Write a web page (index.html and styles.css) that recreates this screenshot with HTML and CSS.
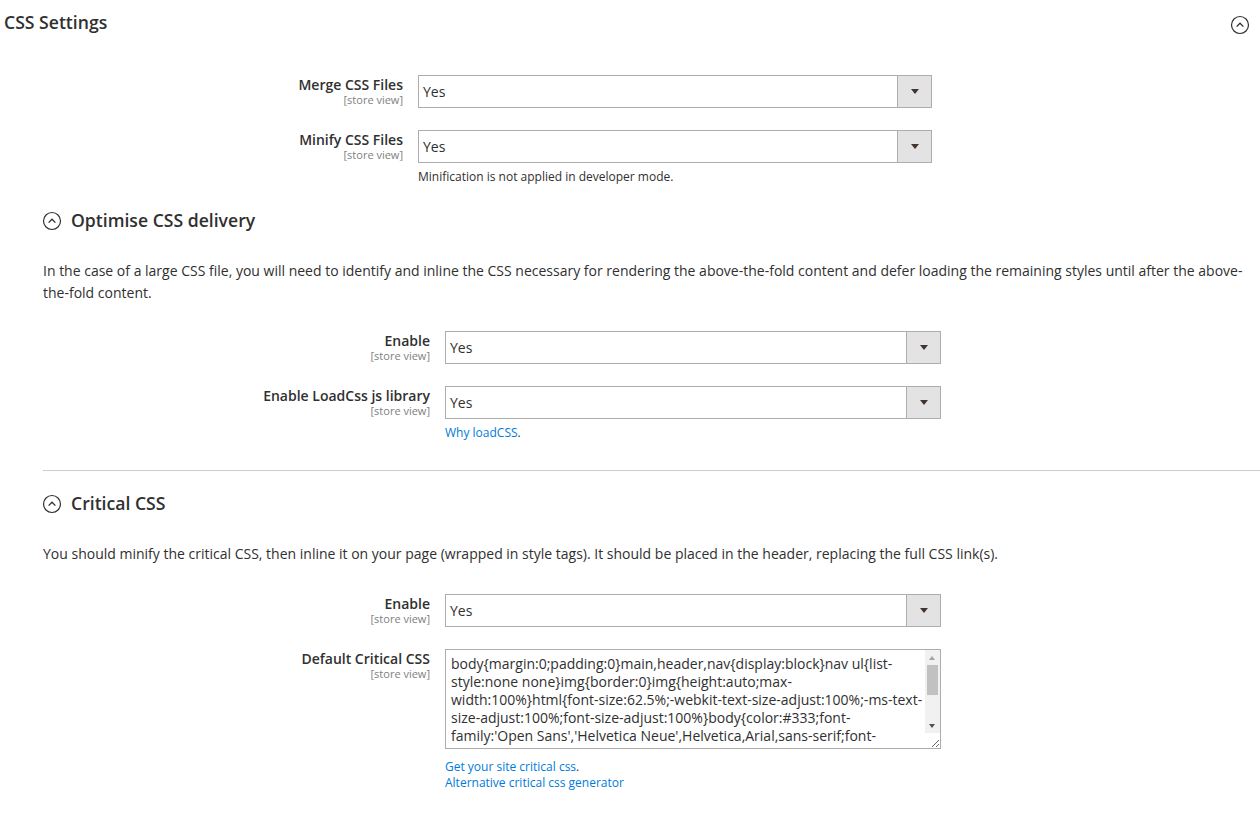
FILE: index.html
```html
<!DOCTYPE html>
<html>
<head>
<meta charset="utf-8">
<link rel="stylesheet" href="styles.css">
</head>
<body>
<div class="page">
  <div class="section-head">
    <span class="section-title">CSS Settings</span>
    <svg class="toggle" width="20" height="20" viewBox="0 0 20 20"><circle cx="10" cy="10" r="8.5" fill="none" stroke="#303030" stroke-width="1.2"/><path d="M6.6 11.6 L10 8.2 L13.4 11.6" fill="none" stroke="#303030" stroke-width="1.3"/></svg>
  </div>

  <div class="fields fields-top">
    <div class="label"><span class="name">Merge CSS Files</span><span class="scope">[store view]</span></div>
    <div class="control">
      <div class="select"><span class="value">Yes</span><span class="arrow"></span></div>
    </div>
    <div class="label"><span class="name">Minify CSS Files</span><span class="scope">[store view]</span></div>
    <div class="control">
      <div class="select"><span class="value">Yes</span><span class="arrow"></span></div>
      <div class="note">Minification is not applied in developer mode.</div>
    </div>
  </div>

  <div class="sub">
    <div class="sub-head">
      <svg class="sub-toggle" width="20" height="20" viewBox="0 0 20 20"><circle cx="10" cy="10" r="8.5" fill="none" stroke="#303030" stroke-width="1.2"/><path d="M6.6 11.6 L10 8.2 L13.4 11.6" fill="none" stroke="#303030" stroke-width="1.3"/></svg>
      <span class="sub-title">Optimise CSS delivery</span>
    </div>
    <p class="desc">In the case of a large CSS file, you will need to identify and inline the CSS necessary for rendering the above-the-fold content and defer loading the remaining styles until after the above-the-fold content.</p>
    <div class="fields fields-sub">
      <div class="label"><span class="name">Enable</span><span class="scope">[store view]</span></div>
      <div class="control">
        <div class="select"><span class="value">Yes</span><span class="arrow"></span></div>
      </div>
      <div class="label"><span class="name">Enable LoadCss js library</span><span class="scope">[store view]</span></div>
      <div class="control">
        <div class="select"><span class="value">Yes</span><span class="arrow"></span></div>
        <div class="note"><a href="#" class="link">Why loadCSS</a>.</div>
      </div>
    </div>
  </div>

  <div class="divider"></div>

  <div class="sub">
    <div class="sub-head sub-head-2">
      <svg class="sub-toggle" width="20" height="20" viewBox="0 0 20 20"><circle cx="10" cy="10" r="8.5" fill="none" stroke="#303030" stroke-width="1.2"/><path d="M6.6 11.6 L10 8.2 L13.4 11.6" fill="none" stroke="#303030" stroke-width="1.3"/></svg>
      <span class="sub-title">Critical CSS</span>
    </div>
    <p class="desc desc-2">You should minify the critical CSS, then inline it on your page (wrapped in style tags). It should be placed in the header, replacing the full CSS link(s).</p>
    <div class="fields fields-sub">
      <div class="label"><span class="name">Enable</span><span class="scope">[store view]</span></div>
      <div class="control">
        <div class="select"><span class="value">Yes</span><span class="arrow"></span></div>
      </div>
      <div class="label"><span class="name">Default Critical CSS</span><span class="scope">[store view]</span></div>
      <div class="control">
        <div class="ta-wrap">
          <textarea class="textarea">body{margin:0;padding:0}main,header,nav{display:block}nav ul{list-style:none none}img{border:0}img{height:auto;max-width:100%}html{font-size:62.5%;-webkit-text-size-adjust:100%;-ms-text-size-adjust:100%;font-size-adjust:100%}body{color:#333;font-family:'Open Sans','Helvetica Neue',Helvetica,Arial,sans-serif;font-style:normal;font-weight:400;line-height:1.42857143;font-size:1.4rem}p{margin-top:0;margin-bottom:1rem}a{color:#1979c3;text-decoration:none}a:visited{color:#1979c3;text-decoration:none}a:hover{color:#006bb4;text-decoration:underline}ul{margin-top:0;margin-bottom:2.5rem}ul>li{margin-top:0;margin-bottom:1rem}ul ul{margin-bottom:0}button{background-image:none;background:#eee;border:1px solid #ccc;color:#333;cursor:pointer;display:inline-block;font-family:'Open Sans','Helvetica Neue',Helvetica,Arial,sans-serif;font-weight:600;margin:0;padding:7px 15px;font-size:1.4rem;line-height:1.6rem;box-sizing:border-box;vertical-align:middle}</textarea>
          <div class="vscroll">
            <div class="sb-btn sb-up"></div>
            <div class="sb-thumb"></div>
            <div class="sb-btn sb-down"></div>
          </div>
        </div>
        <div class="links">
          <div><a href="#" class="link">Get your site critical css</a>.</div>
          <div><a href="#" class="link">Alternative critical css generator</a></div>
        </div>
      </div>
    </div>
  </div>
</div>
</body>
</html>
```
FILE: styles.css
```css
html, body {
  margin: 0;
  padding: 0;
  background: #fff;
}
body {
  font-family: "Open Sans", "Liberation Sans", sans-serif;
  color: #303030;
  font-size: 14px;
}
.page {
  width: 1260px;
}
.section-head {
  display: flex;
  align-items: center;
  justify-content: space-between;
  height: 44px;
  padding-left: 4px;
  padding-right: 10px;
}
.section-title {
  font-size: 17.6px;
  font-weight: 600;
  line-height: 24px;
}
.toggle {
  margin-top: 6px;
}
.fields {
  display: grid;
  column-gap: 15px;
  row-gap: 22px;
}
.fields-top {
  grid-template-columns: 403px 514px;
  margin-top: 31px;
}
.fields-sub {
  grid-template-columns: 387px 496px;
  margin-left: 43px;
}
.label {
  display: flex;
  flex-direction: column;
  align-items: flex-end;
  padding-top: 1px;
}
.name {
  font-size: 14px;
  font-weight: 600;
  line-height: 18px;
}
.scope {
  font-size: 11px;
  line-height: 12px;
  color: #808080;
}
.select {
  display: flex;
  height: 33px;
  box-sizing: border-box;
  border: 1px solid #adadad;
  background: #fff;
}
.value {
  flex: 1;
  padding-left: 4px;
  line-height: 31px;
  font-size: 14px;
}
.arrow {
  width: 33px;
  background: #e3e3e3;
  border-left: 1px solid #adadad;
  position: relative;
}
.arrow::after {
  content: "";
  position: absolute;
  left: 13px;
  top: 13px;
  border-left: 4px solid transparent;
  border-right: 4px solid transparent;
  border-top: 5px solid #41362f;
}
.note {
  margin-top: 6px;
  font-size: 12px;
  line-height: 16px;
}
.link {
  color: #007bdb;
  text-decoration: none;
}
.sub-head {
  display: flex;
  align-items: center;
  gap: 9px;
  margin-left: 42px;
  margin-top: 23px;
  height: 24px;
}
.sub-head-2 {
  margin-top: 20px;
}
.sub-toggle {
  margin-top: 2px;
}
.sub-title {
  font-size: 17.6px;
  font-weight: 600;
  line-height: 24px;
}
.desc {
  margin: 28px 17px 27px 43px;
  font-size: 14px;
  line-height: 22px;
}
.desc-2 {
  margin-bottom: 29px;
}
.divider {
  margin-top: 29px;
  margin-left: 43px;
  height: 1px;
  background: #cccccc;
}
.ta-wrap {
  position: relative;
  width: 496px;
  height: 100px;
}
.textarea {
  display: block;
  width: 496px;
  height: 100px;
  box-sizing: border-box;
  border: 1px solid #adadad;
  padding: 5px 16px 5px 5px;
  margin: 0;
  font-family: "Open Sans", "Liberation Sans", sans-serif;
  font-size: 14px;
  line-height: 18px;
  color: #303030;
  resize: both;
  overflow: hidden;
}
.vscroll {
  position: absolute;
  top: 1px;
  right: 1px;
  width: 15px;
  height: 83px;
  background: #f1f1f1;
  display: flex;
  flex-direction: column;
}
.sb-btn {
  height: 15px;
  position: relative;
}
.sb-btn::after {
  content: "";
  position: absolute;
  left: 4px;
  border-left: 3.5px solid transparent;
  border-right: 3.5px solid transparent;
}
.sb-up::after {
  top: 6px;
  border-bottom: 4px solid #a3a3a3;
}
.sb-down {
  margin-top: auto;
}
.sb-down::after {
  top: 6px;
  border-top: 4px solid #505050;
}
.sb-thumb {
  height: 30px;
  margin: 0 2px;
  background: #c1c1c1;
}
.links {
  margin-top: 10px;
  font-size: 12px;
  line-height: 16px;
}
```
